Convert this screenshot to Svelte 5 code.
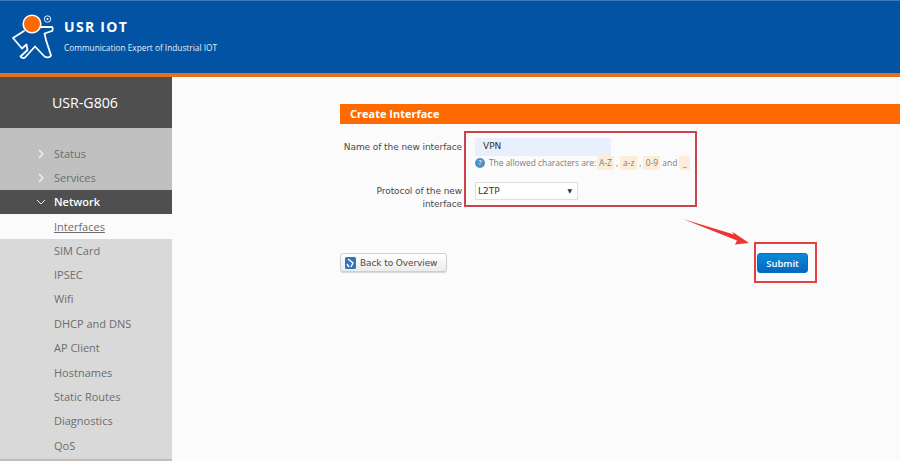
<script>
  const sub = ['SIM Card','IPSEC','Wifi','DHCP and DNS','AP Client','Hostnames','Static Routes','Diagnostics','QoS'];
</script>

<div class="page">
  <header class="top">
    <svg class="logo" viewBox="8 8 56 56" width="56" height="56" aria-hidden="true">
      <path d="M24 31 L13 38 L22 48.5 L26.5 44.5 L27.5 50 L20.5 56.5 C21 58 23.5 58.5 25 57.5 L35 46.5 L44.5 56.5 C47 58 50 57.5 51 55.5 L46 40 L44.5 33.5 L52 31 C53 30 53 28 52 27 L40 27" fill="none" stroke="#fff" stroke-width="1.8" stroke-linejoin="round" stroke-linecap="round"/>
      <circle cx="32" cy="24" r="8.8" fill="#ff6a00" stroke="#fff" stroke-width="1.6"/>
      <circle cx="47.5" cy="19" r="3.2" fill="none" stroke="#fff" stroke-width="0.9"/>
      <circle cx="47.5" cy="19" r="1" fill="#fff"/>
    </svg>
    <div class="brand">
      <div class="name">USR IOT</div>
      <div class="tag">Communication Expert of Industrial IOT</div>
    </div>
  </header>

  <div class="body">
    <aside class="side">
      <div class="model">USR-G806</div>
      <nav class="menu">
        <div class="group">
          <a class="item top-item"><svg class="chev" viewBox="0 0 10 10" width="10" height="10"><path d="M3 1 L7 5 L3 9" fill="none" stroke="#f4f4f4" stroke-width="1.2"/></svg>Status</a>
          <a class="item top-item"><svg class="chev" viewBox="0 0 10 10" width="10" height="10"><path d="M3 1 L7 5 L3 9" fill="none" stroke="#f4f4f4" stroke-width="1.2"/></svg>Services</a>
        </div>
        <a class="item active"><svg class="chev" viewBox="0 0 10 10" width="10" height="10"><path d="M1 3 L5 7 L9 3" fill="none" stroke="#eee" stroke-width="1"/></svg>Network</a>
        <a class="item current">Interfaces</a>
        <div class="subs">
          {#each sub as s}
            <a class="item">{s}</a>
          {/each}
        </div>
      </nav>
    </aside>

    <main class="main">
      <div class="panel">
        <h2>Create Interface</h2>
        <div class="row name-row">
          <label>Name of the new interface</label>
          <div class="field">
            <div class="input">VPN</div>
            <div class="hint">
              <span class="help">?</span><span class="lead">The allowed characters are:</span><code>A-Z</code><span class="sep">,</span><code>a-z</code><span class="sep">,</span><code>0-9</code><span class="sep">and</span><code>_</code>
            </div>
          </div>
        </div>
        <div class="row proto-row">
          <label>Protocol of the new interface</label>
          <div class="select">L2TP<span class="caret">▼</span></div>
        </div>
        <div class="actions">
          <button class="back">
            <svg viewBox="0 0 11 12" width="11" height="12" aria-hidden="true"><rect width="11" height="12" rx="1.5" fill="#2f77b5"/><path d="M3 2 L8 6 L6 10 M2 7 L4 10" fill="none" stroke="#fff" stroke-width="1.4"/></svg>
            Back to Overview
          </button>
          <button class="submit">Submit</button>
        </div>
        <div class="mark mark-form"></div>
        <div class="mark mark-submit"></div>
        <svg class="arrow" viewBox="0 0 70 28" width="70" height="28" aria-hidden="true">
          <path d="M0 0 L51 15.5 L49 12.5 L66 24 L52 25.5 L54 21.5 Z" fill="#ee3535"/>
        </svg>
      </div>
    </main>
  </div>
</div>

<style>
  :global(body) { margin: 0; }
  .page { width: 900px; height: 461px; overflow: hidden; background: #fbfbfb; display: flex; flex-direction: column; font-family: "Open Sans", sans-serif; }
  .top { height: 73px; flex: none; background: #0353a4; border-top: 1px solid #3d7cbc; box-sizing: border-box; display: flex; align-items: flex-start; padding: 7px 0 0 8px; box-shadow: 0 4px 0 #e8701c; position: relative; z-index: 1; }
  .logo { flex: none; }
  .brand { color: #fff; }
  .name { font: 700 14px/18px "Open Sans", sans-serif; letter-spacing: 1.3px; margin-top: 10px; }
  .tag { font: 8.3px/12px "Open Sans", sans-serif; margin-top: 6px; color: #e6eef8; white-space: nowrap; }
  .body { flex: 1; display: flex; margin-top: 4px; min-height: 0; }
  .side { width: 172px; flex: none; background: #d9d9d9; }
  .model { height: 51px; background: #4f4f4f; color: #fff; font-size: 14.2px; line-height: 51px; text-align: right; padding-right: 54px; box-sizing: border-box; }
  .menu { font-size: 11px; color: #6d6d6d; }
  .group { background: #c0c0c0; padding-top: 13.5px; }
  .item { display: block; height: 24.4px; line-height: 24.4px; padding-left: 54px; box-sizing: border-box; position: relative; }
  .chev { position: absolute; left: 36px; top: 7px; }
  .active { background: #4f4f4f; color: #fff; font-weight: 600; height: 24px; line-height: 24px; }
  .current { background: #fbfbfb; text-decoration: underline; line-height: 26px; }
  .subs { height: 220px; border-bottom: 3px solid #bdbdbd; }
  .main { flex: 1; padding: 27px 0 0 167px; }
  .panel { position: relative; width: 561px; font-family: "DejaVu Sans", sans-serif; font-size: 9px; color: #4a4a4a; }
  h2 { margin: 0 0 0 1px; height: 20px; background: #ff6a00; color: #fff; font: 700 11px/20px "Open Sans", sans-serif; padding-left: 10px; }
  .row { display: flex; align-items: flex-start; }
  label { width: 123px; box-sizing: border-box; text-align: right; line-height: 13px; flex: none; letter-spacing: -0.08px; padding-top: 3px; }
  .name-row { margin-top: 14px; }
  .field { margin-left: 13px; }
  .input { width: 136px; height: 18px; line-height: 17px; background: #e8f0fe; padding-left: 8px; box-sizing: border-box; color: #333; }
  .hint { color: #7b7b7b; height: 14px; line-height: 14px; display: flex; align-items: center; white-space: nowrap; font-family: "Open Sans", sans-serif; font-size: 8.4px; width: 220px; }
  .help { width: 10px; height: 10px; border-radius: 50%; background: #4b93c9; color: #fff; font-size: 7px; line-height: 10px; text-align: center; margin-right: 4px; flex: none; }
  .lead { width: 108px; flex: none; }
  .sep { margin: 0 2px; }
  code { background: #fdecd8; font-family: inherit; border-radius: 2px; color: #7b7b7b; width: 17px; text-align: center; flex: none; }
  code:last-child { width: 11px; }
  .proto-row { margin-top: 12px; }
  .select { margin-left: 13px; width: 103px; height: 18px; line-height: 16px; background: #fff; border: 1px solid #dedede; box-sizing: border-box; padding-left: 2px; position: relative; color: #333; }
  .caret { position: absolute; right: 5px; top: 0; font-size: 6px; }
  .actions { display: flex; justify-content: space-between; align-items: flex-start; margin-top: 42px; width: 469px; padding-left: 1px; box-sizing: border-box; }
  button { font-family: inherit; font-size: 9px; margin: 0; }
  .back { width: 107px; height: 19px; background: linear-gradient(#fff, #ececec); border: 1px solid #cfcfcf; border-radius: 3px; color: #4a4a4a; display: flex; align-items: center; gap: 4px; padding: 0 0 0 4px; box-shadow: 0 1px 1px rgba(0,0,0,.15); white-space: nowrap; letter-spacing: -0.1px; }
  .submit { width: 51px; height: 20px; background: linear-gradient(#0a8ad8, #0467bf); border: 1px solid #0a6fc0; border-radius: 3px; color: #fff; font-family: "Open Sans", sans-serif; font-size: 9.5px; font-weight: 600; padding: 0; }
  .mark { position: absolute; border: 2px solid #d9333f; box-sizing: border-box; }
  .mark-form { left: 125px; top: 27px; width: 233px; height: 76px; border-color: #c9424e; }
  .mark-submit { left: 415px; top: 138px; width: 63px; height: 41px; border-color: #e34046; }
  .arrow { position: absolute; left: 344px; top: 115px; }
</style>
